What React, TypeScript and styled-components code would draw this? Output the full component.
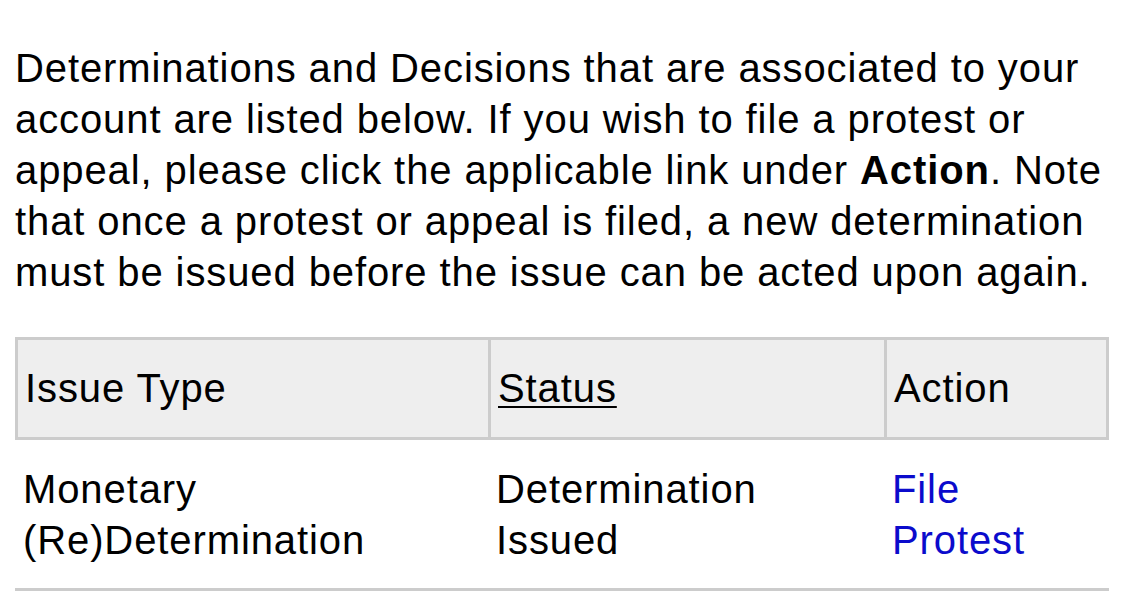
import React from 'react'
import styled, { createGlobalStyle } from 'styled-components'

const GlobalStyle = createGlobalStyle`
  body {
    margin: 0;
    background: #fff;
    font-family: "Liberation Sans", Arial, sans-serif;
    color: #000;
    letter-spacing: 0.9px;
  }
`

const Page = styled.div`
  padding: 43px 16px 0 15px;
`

const Intro = styled.p`
  margin: 0 0 39px 0;
  width: 1096px;
  font-size: 40px;
  line-height: 51px;
`

const Table = styled.table`
  width: 1094px;
  border-collapse: separate;
  border-spacing: 0;
  table-layout: fixed;
  font-size: 40px;
  line-height: 51px;
`

const HeadCell = styled.th<{ $last?: boolean }>`
  background: #eeeeee;
  font-weight: normal;
  text-align: left;
  padding: 23px 8px 23px 7px;
  border-top: 3px solid #cccccc;
  border-bottom: 3px solid #cccccc;
  border-left: 3px solid #cccccc;
  border-right: ${(p) => (p.$last ? '3px solid #cccccc' : '0')};
`

const SortLabel = styled.span`
  text-decoration: underline;
  text-underline-offset: 4px;
  text-decoration-thickness: 2px;
`

const Cell = styled.td`
  padding: 24px 16px 22px 8px;
  vertical-align: top;
  border-bottom: 3px solid #cccccc;
`

const ActionLink = styled.a`
  color: #0b0bcc;
  text-decoration: none;
`

const rows = [
  {
    type: 'Monetary (Re)Determination',
    status: 'Determination Issued',
    action: 'File Protest',
  },
]

function App() {
  return (
    <Page>
      <GlobalStyle />
      <Intro>
        Determinations and Decisions that are associated to your account are listed below. If you
        wish to file a protest or appeal, please click the applicable link under <b>Action</b>. Note
        that once a protest or appeal is filed, a new determination must be issued before the issue
        can be acted upon again.
      </Intro>
      <Table>
        <colgroup>
          <col style={{ width: 473 }} />
          <col style={{ width: 396 }} />
          <col style={{ width: 225 }} />
        </colgroup>
        <thead>
          <tr>
            <HeadCell>Issue Type</HeadCell>
            <HeadCell>
              <SortLabel>Status</SortLabel>
            </HeadCell>
            <HeadCell $last>Action</HeadCell>
          </tr>
        </thead>
        <tbody>
          {rows.map((r) => (
            <tr key={r.type}>
              <Cell>{r.type}</Cell>
              <Cell>{r.status}</Cell>
              <Cell>
                <ActionLink href="#">{r.action}</ActionLink>
              </Cell>
            </tr>
          ))}
        </tbody>
      </Table>
    </Page>
  )
}

export default App
